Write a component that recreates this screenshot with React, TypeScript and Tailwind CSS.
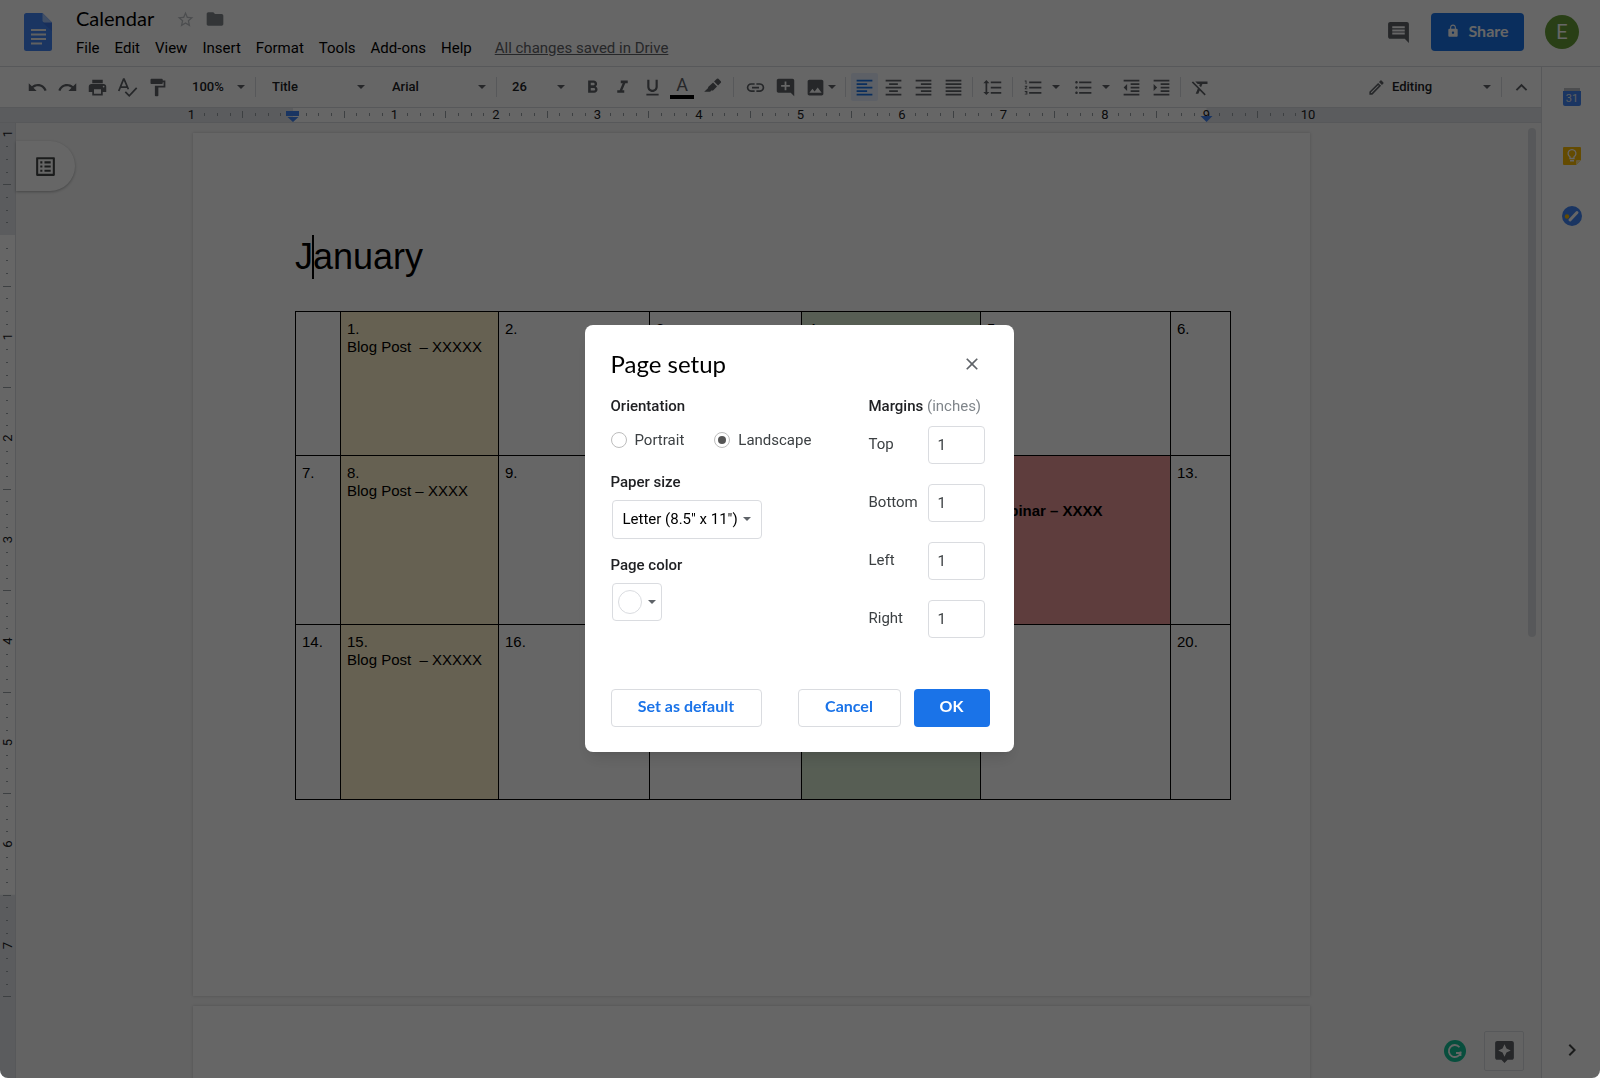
import { useState } from "react";
import type { ReactNode } from "react";
import {
  MdAddComment,
  MdAssistant,
  MdChevronRight,
  MdClose,
  MdComment,
  MdExpandLess,
  MdFolder,
  MdFormatAlignCenter,
  MdFormatAlignJustify,
  MdFormatAlignLeft,
  MdFormatAlignRight,
  MdFormatBold,
  MdFormatClear,
  MdFormatIndentDecrease,
  MdFormatIndentIncrease,
  MdFormatItalic,
  MdFormatLineSpacing,
  MdFormatListBulleted,
  MdFormatListNumbered,
  MdFormatPaint,
  MdFormatUnderlined,
  MdImage,
  MdInsertLink,
  MdListAlt,
  MdLock,
  MdOutlineModeEdit,
  MdPrint,
  MdRedo,
  MdStarBorder,
  MdUndo,
} from "react-icons/md";

const INCH = 101.5;

const menus = ["File", "Edit", "View", "Insert", "Format", "Tools", "Add-ons", "Help"];

type Cell = { day?: string; text?: string; bold?: boolean; color?: string };

const rows: { height: string; cells: Cell[] }[] = [
  {
    height: "h-36",
    cells: [
      {},
      { day: "1.", text: "Blog Post \u00a0– XXXXX", color: "bg-[#fff2cc]" },
      { day: "2." },
      { day: "3." },
      { day: "4.", color: "bg-[#d9ead3]" },
      { day: "5." },
      { day: "6." },
    ],
  },
  {
    height: "h-[169px]",
    cells: [
      { day: "7." },
      { day: "8.", text: "Blog Post – XXXX", color: "bg-[#fff2cc]" },
      { day: "9." },
      { day: "10." },
      { day: "11.", color: "bg-[#d9ead3]" },
      { day: "12.", text: "Webinar – XXXX", bold: true, color: "bg-[#ea9999]" },
      { day: "13." },
    ],
  },
  {
    height: "h-[175px]",
    cells: [
      { day: "14." },
      { day: "15.", text: "Blog Post \u00a0– XXXXX", color: "bg-[#fff2cc]" },
      { day: "16." },
      { day: "17." },
      { day: "18.", color: "bg-[#d9ead3]" },
      { day: "19." },
      { day: "20." },
    ],
  },
];

function Arrow({ className = "" }: { className?: string }) {
  return (
    <svg viewBox="0 0 8 4" className={`pointer-events-none h-1 w-2 shrink-0 fill-[#5f6368] ${className}`}>
      <path d="M0 0h8L4 4z" />
    </svg>
  );
}

function Tool({ label, children }: { label: string; children: ReactNode }) {
  return (
    <button aria-label={label} className="flex h-7 w-[30px] shrink-0 items-center justify-center text-[21px]">
      {children}
    </button>
  );
}

function Separator() {
  return <div className="h-5 w-px shrink-0 bg-[#dadce0]" />;
}

function Picker({ label, value, className }: { label: string; value: string; className: string }) {
  return (
    <div className={`flex shrink-0 items-center ${className}`}>
      <select
        aria-label={label}
        className="-mr-2 min-w-0 flex-1 appearance-none bg-transparent text-[13px] font-medium text-[#202124]"
      >
        <option>{value}</option>
      </select>
      <Arrow />
    </div>
  );
}

function DocsLogo() {
  return (
    <svg viewBox="0 0 28 38" className="h-[38px] w-7">
      <path d="M2.500 0H18.500L28 9.500V35.500A2.500 2.500 0 0 1 25.500 38H2.500A2.500 2.500 0 0 1 0 35.500V2.500A2.500 2.500 0 0 1 2.500 0z" fill="#4285f4" />
      <path d="M18.500 9.500L28 18V9.500z" fill="#3367d6" opacity="0.5" />
      <path d="M18.500 0L28 9.500H20.500A2 2 0 0 1 18.500 7.500z" fill="#a1c2fa" />
      <path d="M7 16h15v2H7zM7 20.500h15v2H7zM7 25h15v2H7zM7 29.500h11v2H7z" fill="#f1f1f1" />
    </svg>
  );
}

function SpellcheckIcon() {
  return (
    <svg viewBox="0 0 24 24" className="h-[21px] w-[21px]" fill="none" stroke="currentColor" strokeWidth="2">
      <path d="M2 16L7.500 2.500h.6L13 14M4 11.500h7.500" />
      <path d="M9.500 17l4.500 4.500 8.500-9" />
    </svg>
  );
}

function HighlightIcon() {
  return (
    <svg viewBox="0 0 24 24" className="h-[19px] w-[19px]" fill="currentColor">
      <path d="M14 4.500l3.500-3.500a1.500 1.500 0 0 1 2 0l3 3a1.500 1.500 0 0 1 0 2L19 9.500z" />
      <path d="M12.700 5.800l5 5-4.600 4.700a1.500 1.500 0 0 1-2 .1L9 17.500H1.500l5-5a1.600 1.600 0 0 1 0-1.200z" />
    </svg>
  );
}

function HorizontalRuler() {
  const ticks = Array.from({ length: 87 }, (_, i) => i - 7);
  return (
    <div className="flex h-4 shrink-0 justify-center overflow-hidden border-y border-[#dadce0] bg-[#e3e6ea] pr-[38px]">
      <svg width="1117" height="14" className="overflow-visible">
        <g transform="translate(100 0)">
          <rect width={INCH * 9} height="14" fill="#fff" />
          {ticks.map((t) => {
            const x = Math.round((t * INCH) / 8) + 0.5;
            if (t % 8 === 0) {
              return null;
            }
            const half = t % 4 === 0;
            return <path key={t} d={half ? `M${x} 3v7` : `M${x} 5v3`} stroke="#9aa0a6" />;
          })}
          {[-1, 1, 2, 3, 4, 5, 6, 7, 8, 9, 10].map((n) => (
            <text key={n} x={n * INCH} y="11" textAnchor="middle" className="fill-[#202124] font-[Roboto] text-[13px]">
              {Math.abs(n)}
            </text>
          ))}
          <path d="M-7 3h13v5h-13zM-5.500 9h11l-5.500 5z" fill="#4285f4" />
          <path d={`M${INCH * 9 - 6} 8h12l-6 6z`} fill="#4285f4" />
        </g>
      </svg>
    </div>
  );
}

function VerticalRuler() {
  const ticks = Array.from({ length: 68 }, (_, i) => i - 7);
  return (
    <div className="w-4 shrink-0 overflow-hidden border-r border-[#dadce0] bg-[#e3e6ea]">
      <svg width="15" height="880" className="overflow-visible">
        <g transform="translate(0 112)">
          <rect width="15" height={INCH * 6.5} fill="#fff" />
          {ticks.map((t) => {
            const y = Math.round((t * INCH) / 8) + 0.5;
            if (t % 8 === 0) {
              return null;
            }
            const half = t % 4 === 0;
            return <path key={t} d={half ? `M3 ${y}h8` : `M6 ${y}h2`} stroke="#9aa0a6" />;
          })}
          {[-1, 1, 2, 3, 4, 5, 6, 7].map((n) => (
            <text
              key={n}
              transform={`translate(12 ${n * INCH}) rotate(-90)`}
              textAnchor="middle"
              className="fill-[#202124] font-[Roboto] text-[13px]"
            >
              {Math.abs(n)}
            </text>
          ))}
        </g>
      </svg>
    </div>
  );
}

function Header() {
  return (
    <header className="flex h-[67px] shrink-0 items-center border-b border-[#dadce0] pr-[21px] pb-0.5 pl-6">
      <DocsLogo />
      <div className="ml-6 flex flex-1 flex-col">
        <div className="flex h-8 items-center">
          <h1 className="pb-0.5 font-[Lato] text-xl leading-6 text-black">Calendar</h1>
          <button aria-label="Star" className="ml-[22px] text-[19px] text-[#bdc1c6]">
            <MdStarBorder />
          </button>
          <button aria-label="Move" className="ml-2.5 text-[20px] text-[#80868b]">
            <MdFolder />
          </button>
        </div>
        <nav className="flex h-[26px] items-center gap-[15px] text-[15px] text-black">
          {menus.map((menu) => (
            <button key={menu}>{menu}</button>
          ))}
          <a href="#history" className="ml-2 text-[#5f6368] underline">
            All changes saved in Drive
          </a>
        </nav>
      </div>
      <button aria-label="Comments" className="text-[25px] text-[#5f6368]">
        <MdComment />
      </button>
      <button className="ml-5 flex h-[38px] w-[93px] items-center justify-center gap-2 rounded bg-[#1a73e8] pb-0.5 font-[Lato] text-base font-bold text-white">
        <MdLock className="text-sm" />
        Share
      </button>
      <button
        aria-label="Account"
        className="ml-[21px] flex h-[34px] w-[34px] items-center justify-center rounded-full bg-[#689f38] text-xl text-white"
      >
        E
      </button>
    </header>
  );
}

function Toolbar() {
  return (
    <div className="flex h-10 shrink-0 items-center pr-2 pl-[22px] text-[#5f6368]">
      <Tool label="Undo"><MdUndo /></Tool>
      <Tool label="Redo"><MdRedo /></Tool>
      <Tool label="Print"><MdPrint /></Tool>
      <Tool label="Spelling"><SpellcheckIcon /></Tool>
      <Tool label="Paint format"><MdFormatPaint /></Tool>
      <Picker label="Zoom" value="100%" className="ml-5 w-[53px]" />
      <div className="ml-2.5"><Separator /></div>
      <Picker label="Styles" value="Title" className="ml-4 w-[93px]" />
      <Picker label="Font" value="Arial" className="ml-[27px] w-[94px]" />
      <div className="ml-2.5"><Separator /></div>
      <Picker label="Font size" value="26" className="mr-3 ml-[15px] w-[53px]" />
      <Tool label="Bold"><MdFormatBold /></Tool>
      <Tool label="Italic"><MdFormatItalic /></Tool>
      <Tool label="Underline"><MdFormatUnderlined /></Tool>
      <button aria-label="Text color" className="flex w-[30px] flex-col items-center text-lg leading-5">
        A
        <span className="h-1 w-6 bg-black" />
      </button>
      <Tool label="Highlight color"><HighlightIcon /></Tool>
      <div className="mx-1.5"><Separator /></div>
      <Tool label="Insert link"><MdInsertLink /></Tool>
      <Tool label="Add comment"><MdAddComment /></Tool>
      <Tool label="Insert image"><MdImage /></Tool>
      <Arrow className="mr-[9px] -ml-0.5" />
      <Separator />
      <button
        aria-label="Align left"
        aria-pressed="true"
        className="ml-[5px] flex h-7 w-[27px] items-center justify-center rounded-xs bg-[#e8f0fe] text-[21px] text-[#1a73e8]"
      >
        <MdFormatAlignLeft />
      </button>
      <Tool label="Align center"><MdFormatAlignCenter /></Tool>
      <Tool label="Align right"><MdFormatAlignRight /></Tool>
      <Tool label="Justify"><MdFormatAlignJustify /></Tool>
      <div className="mx-1"><Separator /></div>
      <Tool label="Line spacing"><MdFormatLineSpacing /></Tool>
      <div className="mx-[5px]"><Separator /></div>
      <Tool label="Numbered list"><MdFormatListNumbered /></Tool>
      <Arrow className="mr-2 ml-1" />
      <Tool label="Bulleted list"><MdFormatListBulleted /></Tool>
      <Arrow className="mr-1.5 ml-1" />
      <Tool label="Decrease indent"><MdFormatIndentDecrease /></Tool>
      <Tool label="Increase indent"><MdFormatIndentIncrease /></Tool>
      <div className="mx-1"><Separator /></div>
      <Tool label="Clear formatting"><MdFormatClear /></Tool>
      <div className="ml-auto flex items-center">
        <MdOutlineModeEdit className="text-[19px]" />
        <Picker label="Mode" value="Editing" className="mr-2.5 ml-1.5 w-[99px]" />
        <Separator />
        <button aria-label="Hide menus" className="ml-2 text-[23px]">
          <MdExpandLess />
        </button>
      </div>
    </div>
  );
}

function CalendarTable() {
  return (
    <table className="w-[936px] table-fixed border-collapse text-left text-[15px] leading-[18px]">
      <colgroup>
        <col className="w-[45px]" />
        <col className="w-[158px]" />
        <col className="w-[151px]" />
        <col className="w-[152px]" />
        <col className="w-[179px]" />
        <col className="w-[190px]" />
        <col />
      </colgroup>
      <tbody>
        {rows.map((row) => (
          <tr key={row.height} className={row.height}>
            {row.cells.map((cell, i) => (
              <td key={i} className={`border border-black px-1.5 pt-2 align-top whitespace-nowrap ${cell.color ?? ""}`}>
                {cell.day}
                <p className={cell.bold ? "mt-5 font-bold" : ""}>{cell.text}</p>
              </td>
            ))}
          </tr>
        ))}
      </tbody>
    </table>
  );
}

function Editor() {
  return (
    <div className="flex min-h-0 flex-1">
      <VerticalRuler />
      <div className="relative flex min-w-0 flex-1 bg-[#f8f8f8]">
        <button
          aria-label="Show outline"
          className="absolute top-[18px] left-0 flex h-[50px] w-[59px] items-center justify-center rounded-r-full bg-white text-[25px] text-[#444746] shadow-[0_1px_3px_rgba(60,64,67,0.4)]"
        >
          <MdListAlt />
        </button>
        <main className="flex flex-1 flex-col items-center gap-2.5 overflow-hidden pt-2.5 pr-[34px] font-['Liberation_Sans',sans-serif] text-black">
          <article className="h-[863px] w-[1117px] shrink-0 bg-white px-[102px] pt-[102px] shadow-[0_0_3px_rgba(60,64,67,0.25)]">
            <h2 className="relative text-4xl leading-[44px]">
              January
              <span className="absolute top-0 left-[17px] h-full w-0.5 bg-black" />
            </h2>
            <div className="mt-8">
              <CalendarTable />
            </div>
          </article>
          <article className="h-[863px] w-[1117px] shrink-0 bg-white shadow-[0_0_3px_rgba(60,64,67,0.25)]" />
        </main>
        <div className="w-5 shrink-0 pt-[5px] pl-[7px]">
          <div className="h-[509px] w-2 rounded-full bg-[#dadce0]" />
        </div>
        <div className="absolute right-[17px] bottom-[7px] flex items-center gap-[18px]">
          <svg viewBox="0 0 22 22" className="h-[22px] w-[22px]">
            <circle cx="11" cy="11" r="11" fill="#15c39a" />
            <path d="M15.500 7.200A6 6 0 1 0 16.500 13H12M16.500 11.500V16" fill="none" stroke="#fff" strokeWidth="1.800" />
          </svg>
          <button
            aria-label="Explore"
            className="flex h-10 w-10 items-center justify-center rounded-xs border border-[#dadce0] bg-[#f8f8f8] text-[25px] text-[#5f6368]"
          >
            <MdAssistant />
          </button>
        </div>
      </div>
    </div>
  );
}

function SidePanel() {
  return (
    <aside className="flex w-[59px] shrink-0 flex-col items-center border-l border-[#dadce0] pt-[21px] pb-4 pl-0.5">
      <button aria-label="Calendar">
        <svg viewBox="0 0 18 18" className="h-[18px] w-[18px]">
          <path d="M1 0h16v4H1z" fill="#bdc1c6" />
          <path d="M0 3h18v13a2 2 0 0 1-2 2H2a2 2 0 0 1-2-2z" fill="#4285f4" />
          <text x="9" y="14" textAnchor="middle" className="fill-[#e8eaed] font-[Roboto] text-[11px]">
            31
          </text>
        </svg>
      </button>
      <button aria-label="Keep" className="mt-[41px]">
        <svg viewBox="0 0 18 18" className="h-[18px] w-[18px]">
          <path d="M1 0h16a1 1 0 0 1 1 1v12l-5 5H1a1 1 0 0 1-1-1V1a1 1 0 0 1 1-1z" fill="#fbbc04" />
          <path d="M18 13h-4a1 1 0 0 0-1 1v4z" fill="#fde293" />
          <path d="M7 11.500V9.800a3.900 3.900 0 1 1 4 0v1.700z" fill="none" stroke="#fff" strokeWidth="1.300" />
          <path d="M7 13h4v1.500H7z" fill="#fff" />
        </svg>
      </button>
      <button aria-label="Tasks" className="mt-[41px]">
        <svg viewBox="0 0 20 20" className="h-5 w-5">
          <circle cx="10" cy="10" r="10" fill="#4285f4" />
          <path d="M8 14L15 6.500" stroke="#fff" strokeWidth="3" strokeLinecap="round" />
          <circle cx="5" cy="10.500" r="2.200" fill="#fbbc04" />
        </svg>
      </button>
      <button aria-label="Hide side panel" className="mt-auto text-2xl text-[#444746]">
        <MdChevronRight />
      </button>
    </aside>
  );
}

function PageSetup() {
  const [orientation, setOrientation] = useState("Landscape");

  return (
    <div className="fixed inset-0 flex items-center justify-center overflow-hidden rounded-b-lg bg-black/60 pr-0.5 pb-0.5">
      <div
        role="dialog"
        aria-labelledby="page-setup-title"
        className="w-[429px] rounded-lg bg-white pt-[23px] pr-6 pb-[25px] pl-[26px] text-[15px] leading-5 text-[#202124] shadow-lg"
      >
        <div className="flex h-8 items-center justify-between">
          <h2 id="page-setup-title" className="font-[Lato] text-2xl text-black">
            Page setup
          </h2>
          <button aria-label="Close" className="mr-2 text-xl text-[#5f6368]">
            <MdClose />
          </button>
        </div>

        <div className="mt-4 flex justify-between">
          <div>
            <h3 className="font-medium">Orientation</h3>
            <div className="mt-3.5 flex gap-[30px] text-[#3c4043]">
              {["Portrait", "Landscape"].map((name) => (
                <label key={name} className="flex items-center gap-2">
                  <span className="grid place-items-center">
                    <input
                      type="radio"
                      name="orientation"
                      checked={orientation === name}
                      onChange={() => setOrientation(name)}
                      className="peer col-start-1 row-start-1 h-4 w-4 appearance-none rounded-full border border-[#bdbdbd]"
                    />
                    <span className="col-start-1 row-start-1 hidden h-2 w-2 rounded-full bg-[#555] peer-checked:block" />
                  </span>
                  {name}
                </label>
              ))}
            </div>
            <label htmlFor="paper-size" className="mt-[22px] block font-medium">
              Paper size
            </label>
            <div className="mt-2 ml-px flex h-[39px] w-[150px] items-center rounded-sm border border-[#dadce0] pr-2.5">
              <select
                id="paper-size"
                className="-mr-2 h-full min-w-0 flex-1 appearance-none bg-transparent pl-2.5 text-black"
              >
                <option>Letter (8.5" x 11")</option>
              </select>
              <Arrow />
            </div>
            <h3 className="mt-4 font-medium">Page color</h3>
            <button
              aria-label="Page color"
              className="mt-2 ml-px flex h-[38px] w-[50px] items-center justify-center gap-1.5 rounded-sm border border-[#dadce0]"
            >
              <span className="h-6 w-6 rounded-full border border-[#dadce0]" />
              <Arrow />
            </button>
          </div>

          <div className="mr-[5px] w-[116px]">
            <h3 className="font-medium">
              Margins <span className="font-normal text-[#80868b]">(inches)</span>
            </h3>
            <div className="mt-2.5 flex flex-col gap-5 text-[#3c4043]">
              {["Top", "Bottom", "Left", "Right"].map((side) => (
                <div key={side} className="flex items-center justify-between">
                  <label htmlFor={side} className="pb-0.5">{side}</label>
                  <input
                    id={side}
                    defaultValue="1"
                    className="h-[38px] w-[57px] rounded-sm border border-[#dadce0] px-[9px]"
                  />
                </div>
              ))}
            </div>
          </div>
        </div>

        <div className="mt-[51px] flex font-[Lato] text-base font-bold text-[#1a73e8]">
          <button className="h-[38px] w-[151px] rounded-sm border border-[#dadce0] pb-1">Set as default</button>
          <button className="ml-auto h-[38px] w-[103px] rounded-sm border border-[#dadce0] pb-1">Cancel</button>
          <button className="ml-[13px] h-[38px] w-[76px] rounded-sm bg-[#1a73e8] pb-1 text-white">OK</button>
        </div>
      </div>
    </div>
  );
}

export default function App() {
  return (
    <div className="flex h-screen flex-col overflow-hidden bg-white font-[Roboto,sans-serif]">
      <Header />
      <div className="flex min-h-0 flex-1 overflow-hidden rounded-b-lg">
        <div className="flex min-w-0 flex-1 flex-col">
          <Toolbar />
          <HorizontalRuler />
          <Editor />
        </div>
        <SidePanel />
      </div>
      <PageSetup />
    </div>
  );
}
